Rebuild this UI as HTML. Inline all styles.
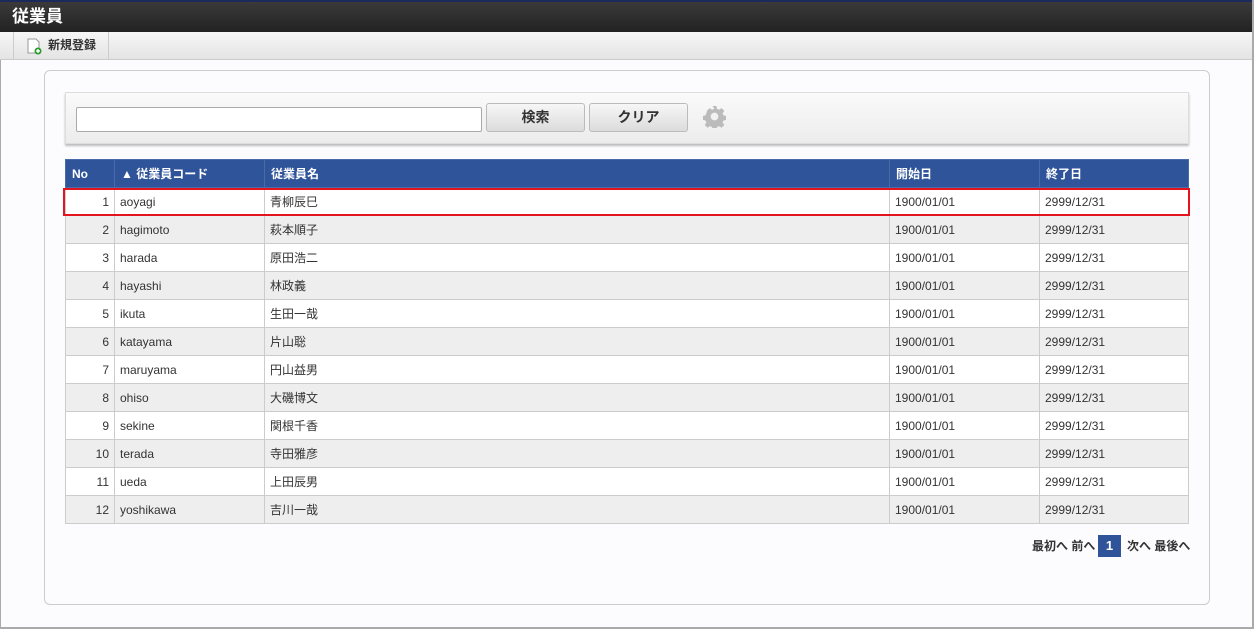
<!DOCTYPE html><html><head><meta charset="utf-8"><style>
body{margin:0;width:1254px;height:630px;overflow:hidden;background:#fff;font-family:"Liberation Sans","Noto Sans CJK JP",sans-serif;position:relative}
.frame{position:absolute;left:0;top:0;width:1251px;height:627px;border-right:2px solid #aaa;border-bottom:2px solid #aaa;border-left:1px solid #aaa;box-sizing:content-box;background:#fcfcff}
.title{position:absolute;left:0;top:0;width:1252px;height:32px;background:linear-gradient(#3a3a3a,#222);border-top:2px solid #1b2a5a;box-sizing:border-box;color:#fff;font-weight:bold;font-size:17px;line-height:30px;padding-left:12px}
.tool{position:absolute;left:0;top:32px;width:1252px;height:28px;background:linear-gradient(#f6f6f6,#e4e4e4);border-bottom:1px solid #ccc;box-sizing:border-box}
.tb{position:absolute;left:13px;top:0;width:94px;height:27px;border-left:1px solid #ccc;border-right:1px solid #ccc;font-size:12px;font-weight:bold;color:#333;line-height:27px}
.panel{position:absolute;left:44px;top:70px;width:1166px;height:535px;border:1px solid #ccc;border-radius:6px;box-sizing:border-box;background:#fcfcff}
.sbar{position:absolute;left:65px;top:92px;width:1124px;height:52px;background:linear-gradient(#fafafa,#ececec);border:1px solid #ddd;box-shadow:0 2px 2px #bbb;box-sizing:border-box}
.inp{position:absolute;left:76px;top:107px;width:406px;height:25px;border:1px solid #aaa;background:#fff;box-sizing:border-box;border-radius:2px}
.btn{position:absolute;top:103px;width:99px;height:29px;border:1px solid #bbb;border-radius:3px;background:linear-gradient(#f7f7f7,#dcdcdc);box-sizing:border-box;text-align:center;line-height:27px;font-weight:bold;font-size:14px;color:#333}
table{position:absolute;left:65px;top:159px;width:1124px;border-collapse:collapse;font-size:12px;color:#333}
th{background:#30549a;color:#fff;height:28px;text-align:left;padding:0 6px;font-size:12px;border:1px solid #4a6aa8;box-sizing:border-box}
td{height:28px;border:1px solid #ccc;padding:0 5px;box-sizing:border-box}
tr:nth-child(odd) td{background:#eee}
tr:nth-child(even) td{background:#fff}
td:first-child{text-align:right}
.hl{position:absolute;left:63px;top:188px;width:1127px;height:28px;border:2px solid #e3141e;box-sizing:border-box}
.pg{position:absolute;top:536px;font-size:12px;font-weight:bold;color:#333;line-height:20px}
</style></head><body>
<div class="frame"></div>
<div class="title">従業員</div>
<div class="tool"><div class="tb"><svg style="position:absolute;left:12px;top:6px" width="16" height="17" viewBox="0 0 16 17"><path d="M2 1h8l3 3v11H2z" fill="#fff" stroke="#999"/><circle cx="12" cy="13" r="3.5" fill="#2a9a2a"/><path d="M10 13h4M12 11v4" stroke="#fff" stroke-width="1.4"/></svg><span style="position:absolute;left:34px">新規登録</span></div></div>
<div class="panel"></div>
<div class="sbar"></div>
<div class="inp"></div>
<div class="btn" style="left:486px">検索</div>
<div class="btn" style="left:589px">クリア</div>
<svg style="position:absolute;left:703px;top:105px" width="23" height="23" viewBox="0 0 24 24"><path fill="#bbb" d="M10 1h4l.6 3 2.2 1 2.6-1.7 2.8 2.8-1.7 2.6 1 2.2 3 .6v4l-3 .6-1 2.2 1.7 2.6-2.8 2.8-2.6-1.7-2.2 1-.6 3h-4l-.6-3-2.2-1-2.6 1.7-2.8-2.8 1.7-2.6-1-2.2-3-.6v-4l3-.6 1-2.2L4.1 6.1 6.9 3.3 9.5 5l2.2-1z"/><circle cx="12" cy="12" r="4" fill="#f2f2f2"/></svg>
<table>
<tr><th style="width:49px">No</th><th style="width:150px">▲ 従業員コード</th><th style="width:625px">従業員名</th><th style="width:150px">開始日</th><th>終了日</th></tr>
<tr><td>1</td><td>aoyagi</td><td>青柳辰巳</td><td>1900/01/01</td><td>2999/12/31</td></tr>
<tr><td>2</td><td>hagimoto</td><td>萩本順子</td><td>1900/01/01</td><td>2999/12/31</td></tr>
<tr><td>3</td><td>harada</td><td>原田浩二</td><td>1900/01/01</td><td>2999/12/31</td></tr>
<tr><td>4</td><td>hayashi</td><td>林政義</td><td>1900/01/01</td><td>2999/12/31</td></tr>
<tr><td>5</td><td>ikuta</td><td>生田一哉</td><td>1900/01/01</td><td>2999/12/31</td></tr>
<tr><td>6</td><td>katayama</td><td>片山聡</td><td>1900/01/01</td><td>2999/12/31</td></tr>
<tr><td>7</td><td>maruyama</td><td>円山益男</td><td>1900/01/01</td><td>2999/12/31</td></tr>
<tr><td>8</td><td>ohiso</td><td>大磯博文</td><td>1900/01/01</td><td>2999/12/31</td></tr>
<tr><td>9</td><td>sekine</td><td>関根千香</td><td>1900/01/01</td><td>2999/12/31</td></tr>
<tr><td>10</td><td>terada</td><td>寺田雅彦</td><td>1900/01/01</td><td>2999/12/31</td></tr>
<tr><td>11</td><td>ueda</td><td>上田辰男</td><td>1900/01/01</td><td>2999/12/31</td></tr>
<tr><td>12</td><td>yoshikawa</td><td>吉川一哉</td><td>1900/01/01</td><td>2999/12/31</td></tr>
</table>
<div class="hl"></div>
<div class="pg" style="left:1032px">最初へ 前へ</div>
<div style="position:absolute;left:1098px;top:535px;width:23px;height:22px;background:#30549a;color:#fff;font-weight:bold;font-size:13px;text-align:center;line-height:22px">1</div>
<div class="pg" style="left:1127px">次へ 最後へ</div>
</body></html>
